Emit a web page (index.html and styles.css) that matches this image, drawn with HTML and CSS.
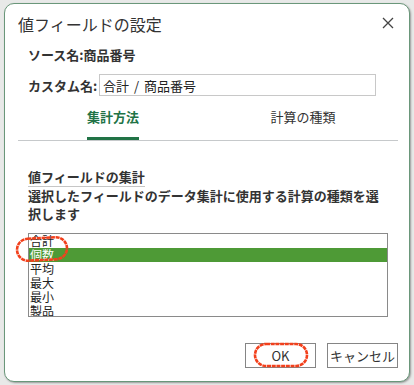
FILE: index.html
```html
<!DOCTYPE html>
<html lang="ja">
<head>
    <meta charset="UTF-8">
    <meta name="viewport" content="width=device-width, initial-scale=1.0">
    <title>値フィールドの設定</title>
    <link rel="stylesheet" href="styles.css">
</head>
<body>
    <div class="dialog">
        <div class="title-bar">
            <span class="title">値フィールドの設定</span>
            <svg class="close" width="12" height="12" viewBox="0 0 12 12">
                <path d="M1 1 L11 11 M11 1 L1 11" stroke="#444" stroke-width="1.3" fill="none"/>
            </svg>
        </div>

        <div class="source-row">ソース名:商品番号</div>

        <div class="custom-row">
            <label for="customName">カスタム名:</label>
            <input type="text" id="customName" value="合計 / 商品番号">
        </div>

        <div class="tabs">
            <div class="tab active"><span>集計方法</span></div>
            <div class="tab"><span>計算の種類</span></div>
        </div>

        <div class="section">
            <div class="section-title"><span>値フィールドの集計</span></div>
            <p class="section-desc">選択したフィールドのデータ集計に使用する計算の種類を選択します</p>

            <ul class="list">
                <li>合計</li>
                <li class="selected">個数</li>
                <li>平均</li>
                <li>最大</li>
                <li>最小</li>
                <li>製品</li>
            </ul>
        </div>

        <div class="buttons">
            <button class="btn">OK</button>
            <button class="btn">キャンセル</button>
        </div>
    </div>

    <!-- hand drawn marks on the screenshot -->
    <svg class="marks" width="414" height="385" viewBox="0 0 414 385">
        <rect x="17" y="238" width="50" height="22" rx="11" ry="11" transform="rotate(-3 42 249)"/>
        <rect x="255" y="344" width="52" height="22" rx="11" ry="11"/>
    </svg>
</body>
</html>
```

FILE: styles.css
```css
* {
    margin: 0;
    padding: 0;
    box-sizing: border-box;
    font-family: "Noto Sans CJK JP", "Noto Sans", sans-serif;
}

body {
    width: 414px;
    height: 385px;
    padding: 3px 4px 3px 4px;
    background: #e8e9e8;
    position: relative;
    overflow: hidden;
}

.dialog {
    height: 379px;
    background: #fff;
    border: 1px solid #6a977a;
    border-radius: 10px;
    box-shadow: 1px 1px 2px rgba(0, 0, 0, 0.35);
    display: flex;
    flex-direction: column;
}

.title-bar {
    height: 40px;
    display: flex;
    align-items: center;
    justify-content: space-between;
    padding: 0 15px 0 13px;
}

.title {
    font-size: 16px;
    color: #333;
}

.close {
    margin-top: -2px;
}

.source-row {
    height: 22px;
    line-height: 22px;
    padding-left: 23px;
    font-size: 13px;
    font-weight: 700;
    color: #333;
}

.custom-row {
    margin-top: 8px;
    height: 22px;
    display: flex;
    align-items: center;
    padding-left: 23px;
}

.custom-row label {
    font-size: 13px;
    font-weight: 700;
    color: #333;
    width: 71px;
}

.custom-row input {
    width: 277px;
    height: 22px;
    border: 1px solid #c8c8c8;
    padding: 0 3px;
    font-size: 13px;
    word-spacing: 2px;
    color: #222;
    outline: none;
}

.tabs {
    margin: 10px 11px 0 13px;
    display: flex;
    border-bottom: 1px solid #c6c9cb;
}

.tab {
    flex: 1;
    display: flex;
    justify-content: center;
    padding-top: 1px;
    font-size: 13px;
    color: #333;
}

.tab span {
    line-height: 20px;
    padding-bottom: 10px;
    border-bottom: 3px solid transparent;
}

.tab.active span {
    color: #217346;
    font-weight: 700;
    border-bottom-color: #217346;
}

.section {
    padding: 22px 0 0 23px;
}

.section-title span {
    display: inline-block;
    font-size: 13px;
    font-weight: 700;
    line-height: 18px;
    color: #333;
    border-bottom: 1px solid #c6c6c6;
}

.section-desc {
    width: 360px;
    font-size: 13px;
    font-weight: 700;
    line-height: 18px;
    color: #333;
}

.list {
    list-style: none;
    margin-top: 10px;
    width: 360px;
    height: 84px;
    border: 1px solid #8a8a8a;
    overflow: hidden;
}

.list li {
    height: 14px;
    line-height: 14px;
    font-size: 12px;
    padding-left: 1px;
    color: #222;
    overflow: hidden;
}

.list li.selected {
    background: #4e9a36;
    color: #fff;
}

.buttons {
    margin-top: auto;
    margin-bottom: 13px;
    padding-right: 11px;
    display: flex;
    justify-content: flex-end;
    gap: 11px;
}

.btn {
    width: 71px;
    height: 25px;
    background: #fff;
    border: 1px solid #858585;
    font-size: 13px;
    color: #333;
}

.marks {
    position: absolute;
    left: 0;
    top: 0;
    pointer-events: none;
}

.marks rect {
    fill: none;
    stroke: #f2401c;
    stroke-width: 2.6;
    stroke-dasharray: 4 0.7;
}
```
